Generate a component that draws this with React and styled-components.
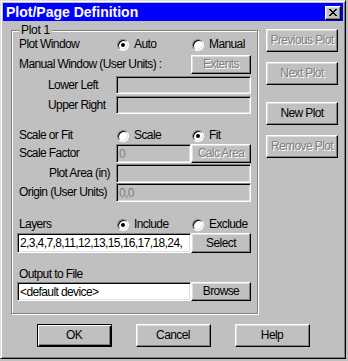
import React from 'react';
import styled, { createGlobalStyle, css } from 'styled-components';

const Global = createGlobalStyle`
  html, body { margin: 0; padding: 0; background: #c0c0c0; }
  body {
    width: 348px; height: 361px; overflow: hidden;
    font-family: "Liberation Sans", Arial, sans-serif;
  }
  * { box-sizing: border-box; }
`;

const uiText = css`
  font-family: "Liberation Sans", Arial, sans-serif;
  font-size: 12px;
  letter-spacing: -0.6px;
`;

const Window = styled.div`
  width: 346px;
  height: 359px;
  background: #c0c0c0;
  border: 1px solid;
  border-color: #dfdfdf #000 #000 #dfdfdf;
  box-shadow: inset 1px 1px #fff, inset -1px -1px #808080;
  padding: 2px;
  display: flex;
  flex-direction: column;
`;

const TitleBar = styled.div`
  height: 18px;
  background: #0000ff;
  display: flex;
  align-items: center;
  justify-content: space-between;
  padding: 0 2px 0 3px;
`;

const Title = styled.span`
  color: #fff;
  font-weight: bold;
  font-size: 14px;
  line-height: 18px;
  white-space: nowrap;
`;

const CloseButton = styled.div`
  width: 16px;
  height: 14px;
  background: #c0c0c0;
  border: 1px solid;
  border-color: #fff #000 #000 #fff;
  box-shadow: inset -1px -1px #808080, inset 1px 1px #dfdfdf;
  display: flex;
  align-items: center;
  justify-content: center;
  padding: 0 1px 1px 0;
  margin-top: 1px;
`;

const Body = styled.div`
  display: flex;
  align-items: flex-start;
`;

const GroupBox = styled.div`
  position: relative;
  margin: 9px 0 0 8px;
  width: 247px;
  height: 284px;
  border: 1px solid #808080;
  box-shadow: inset 1px 1px #fff, 1px 1px #fff;
  padding: 6px 6px 0 5px;
  display: flex;
  flex-direction: column;
`;

const Legend = styled.span`
  position: absolute;
  top: -8px;
  left: 7px;
  padding: 0 2px;
  background: #c0c0c0;
  ${uiText};
  letter-spacing: -0.3px;
  line-height: 14px;
  color: #000;
`;

const Row = styled.div`
  display: grid;
  grid-template-columns: 99px 75px 60px;
  height: ${p => p.$h}px;
  margin-top: ${p => p.$mt || 0}px;
  align-items: center;
`;

const Label = styled.span`
  ${uiText};
  line-height: 15px;
  color: #000;
  white-space: nowrap;
  padding-left: ${p => p.$indent || 2}px;
  grid-column: ${p => p.$span || 'auto'};
`;

const Field = styled.div`
  height: 100%;
  border: 1px solid;
  border-color: #808080 #fff #fff #808080;
  box-shadow: inset 1px 1px #000, inset -1px -1px #dfdfdf;
  background: ${p => (p.$disabled ? '#c0c0c0' : '#fff')};
  color: ${p => (p.$disabled ? '#808080' : '#000')};
  ${uiText};
  display: flex;
  align-items: center;
  padding-left: 2px;
  white-space: nowrap;
  overflow: hidden;
  grid-column: ${p => p.$span || 'auto'};
`;

const Button = styled.div`
  width: ${p => p.$w || 72}px;
  height: ${p => p.$h || 23}px;
  margin-top: ${p => p.$mt || 0}px;
  background: #c0c0c0;
  border: 1px solid;
  border-color: #fff #000 #000 #fff;
  box-shadow: inset -1px -1px #808080, inset 1px 1px #dfdfdf;
  display: flex;
  align-items: center;
  justify-content: center;
  ${uiText};
  color: #000;
  white-space: nowrap;
  padding-bottom: 1px;
  ${p =>
    p.$disabled &&
    css`
      color: #808080;
      text-shadow: 1px 1px #fff;
    `}
  ${p =>
    p.$default &&
    css`
      border-color: #000;
      box-shadow: inset 1px 1px #fff, inset -1px -1px #000, inset -2px -2px #808080;
    `}
`;

const RightColumn = styled.div`
  display: flex;
  flex-direction: column;
  margin-left: 8px;
  margin-top: 8px;
`;

const Footer = styled.div`
  display: flex;
  justify-content: center;
  gap: 24px;
  margin-top: 10px;
`;

const RadioLabel = styled.label`
  display: flex;
  align-items: center;
  ${uiText};
  line-height: 15px;
  color: #000;
  white-space: nowrap;
  padding-left: 1px;
`;

const RadioCircle = styled.span`
  position: relative;
  width: 12px;
  height: 12px;
  border-radius: 50%;
  border: 1px solid;
  border-color: #808080 #fff #fff #808080;
  background: #fff;
  box-shadow: inset 1px 1px #000, inset -1px -1px #dfdfdf;
  margin-right: 5px;
  flex: none;
  ${p =>
    p.$checked &&
    css`
      &::after {
        content: '';
        position: absolute;
        left: 3px;
        top: 3px;
        width: 4px;
        height: 4px;
        border-radius: 50%;
        background: #000;
      }
    `}
`;

const Radio = ({ checked, children }) => (
  <RadioLabel>
    <RadioCircle $checked={checked} />
    {children}
  </RadioLabel>
);

const CloseX = () => (
  <svg width="8" height="7" viewBox="0 0 8 7" shapeRendering="crispEdges">
    <path
      fill="#000"
      d="M0 0h2v1H0zM6 0h2v1H6zM1 1h2v1H1zM5 1h2v1H5zM2 2h4v1H2zM3 3h2v1H3zM2 4h4v1H2zM1 5h2v1H1zM5 5h2v1H5zM0 6h2v1H0zM6 6h2v1H6z"
    />
  </svg>
);

export default function App() {
  return (
    <>
      <Global />
      <Window>
        <TitleBar>
          <Title>Plot/Page Definition</Title>
          <CloseButton>
            <CloseX />
          </CloseButton>
        </TitleBar>
        <Body>
          <GroupBox>
            <Legend>Plot 1</Legend>
            <Row $h={15} $mt={0}>
              <Label>Plot Window</Label>
              <Radio checked>Auto</Radio>
              <Radio>Manual</Radio>
            </Row>
            <Row $h={19} $mt={3}>
              <Label $span="1 / 3">Manual Window (User Units) :</Label>
              <Button $w={60} $h={19} $disabled>Extents</Button>
            </Row>
            <Row $h={18} $mt={2}>
              <Label $indent={31}>Lower Left</Label>
              <Field $disabled $span="2 / 4" />
            </Row>
            <Row $h={18} $mt={2}>
              <Label $indent={31}>Upper Right</Label>
              <Field $disabled $span="2 / 4" />
            </Row>
            <Row $h={15} $mt={14}>
              <Label>Scale or Fit</Label>
              <Radio>Scale</Radio>
              <Radio checked>Fit</Radio>
            </Row>
            <Row $h={19} $mt={1}>
              <Label>Scale Factor</Label>
              <Field $disabled>0</Field>
              <Button $w={60} $h={19} $disabled>Calc Area</Button>
            </Row>
            <Row $h={19} $mt={1}>
              <Label $indent={32}>Plot Area (in)</Label>
              <Field $disabled $span="2 / 4" />
            </Row>
            <Row $h={19} $mt={0}>
              <Label>Origin (User Units)</Label>
              <Field $disabled $span="2 / 4">0,0</Field>
            </Row>
            <Row $h={15} $mt={15}>
              <Label>Layers</Label>
              <Radio checked>Include</Radio>
              <Radio>Exclude</Radio>
            </Row>
            <Row $h={20} $mt={1}>
              <Field $span="1 / 3">2,3,4,7,8,11,12,13,15,16,17,18,24,</Field>
              <Button $w={60} $h={20}>Select</Button>
            </Row>
            <Row $h={15} $mt={14}>
              <Label $span="1 / 4">Output to File</Label>
            </Row>
            <Row $h={19} $mt={0}>
              <Field $span="1 / 3">&lt;default device&gt;</Field>
              <Button $w={60} $h={19}>Browse</Button>
            </Row>
          </GroupBox>
          <RightColumn>
            <Button $disabled>Previous Plot</Button>
            <Button $disabled $mt={10}>Next Plot</Button>
            <Button $mt={17}>New Plot</Button>
            <Button $disabled $mt={10}>Remove Plot</Button>
          </RightColumn>
        </Body>
        <Footer>
          <Button $w={75} $default>OK</Button>
          <Button $w={75}>Cancel</Button>
          <Button $w={75}>Help</Button>
        </Footer>
      </Window>
    </>
  );
}
